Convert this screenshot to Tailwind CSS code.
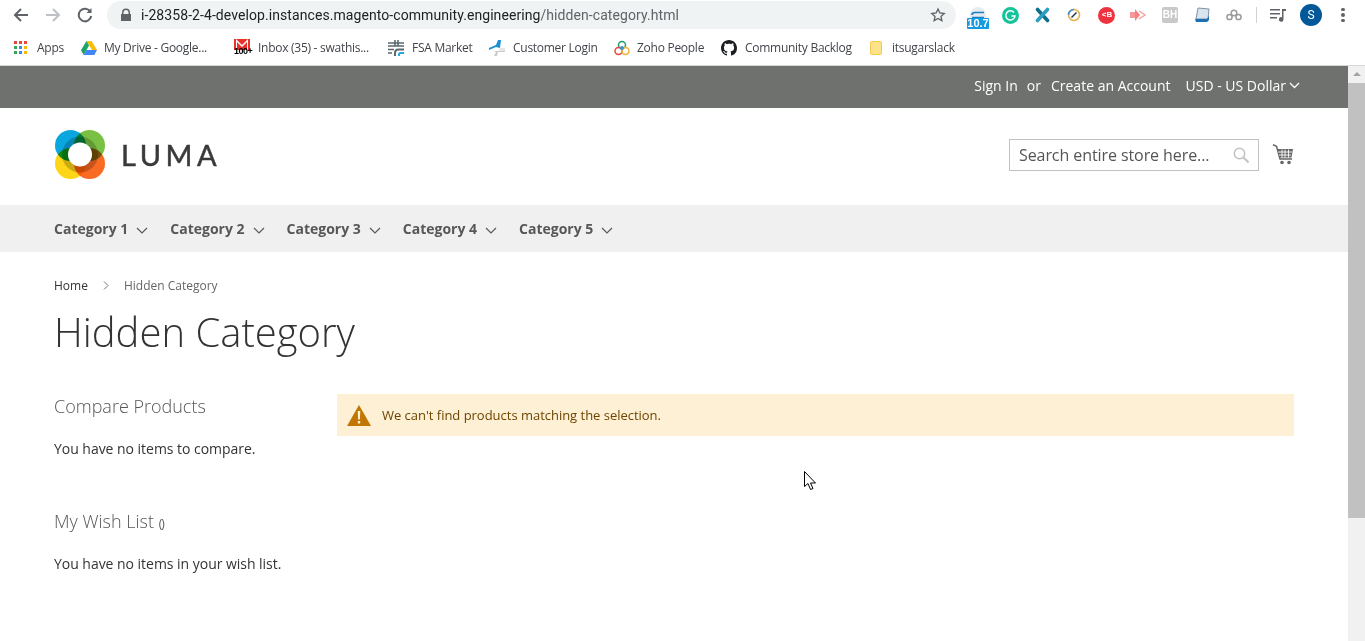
<!DOCTYPE html>
<html lang="en">
<head>
  <meta charset="UTF-8" />
  <title>Hidden Category</title>
  <script src="https://cdn.jsdelivr.net/npm/@tailwindcss/browser@4"></script>
</head>
<body class="relative h-[641px] w-[1365px] overflow-hidden bg-white font-['Open_Sans',sans-serif] text-[#333]">

  <!-- browser toolbar -->
  <div class="flex h-[30px] items-center bg-white">
    <div class="flex w-[107px] items-center gap-[14px] pl-[12px]">
      <svg class="h-[18px] w-[18px]" viewBox="0 0 18 18" fill="none" stroke="#5f6368" stroke-width="2"><path d="M16 9H3M9 3L3 9l6 6"/></svg>
      <svg class="h-[18px] w-[18px]" viewBox="0 0 18 18" fill="none" stroke="#bdc1c6" stroke-width="2"><path d="M2 9h13M9 3l6 6-6 6"/></svg>
      <svg class="h-[18px] w-[18px]" viewBox="0 0 18 18" fill="none" stroke="#5f6368" stroke-width="2"><path d="M14.500 6A6.300 6.300 0 1 0 15.200 10"/><path d="M15.500 2v5h-5" fill="#5f6368" stroke="none"/></svg>
    </div>
    <div class="flex h-[28px] w-[849px] items-center rounded-full bg-[#f0f3f4] pl-[13px] pr-[10px]">
      <svg class="h-[14px] w-[12px]" viewBox="0 0 12 14" fill="#5f6368"><path d="M2 6V4.500a4 4 0 0 1 8 0V6h1v7H1V6zm1.500 0h5V4.500a2.500 2.500 0 0 0-5 0z"/></svg>
      <span class="ml-[9px] font-['Roboto',sans-serif] text-[14px] tracking-[0.075px] text-[#202124]">i-28358-2-4-develop.instances.magento-community.engineering<span class="text-[#5f6368]">/hidden-category.html</span></span>
      <svg class="ml-auto h-[16px] w-[16px]" viewBox="0 0 24 24" fill="none" stroke="#5f6368" stroke-width="2"><path d="M12 3l2.800 6 6.500.7-4.800 4.400 1.300 6.400L12 17.300 6.200 20.500l1.300-6.400L2.700 9.700 9.200 9z"/></svg>
    </div>
    <div class="flex h-[30px] flex-1 items-center pl-[6px]">
      <div class="flex w-[32px] justify-center">
        <div class="relative mt-[6px] h-[22px] w-[22px]">
          <svg class="absolute left-[3px] top-0 h-[11px] w-[16px]" viewBox="0 0 16 11"><path d="M0 11V8a8 8 0 0 1 16 0v3z" fill="#e6ebee"/><path d="M2 8q0-2.500 3-2.500h9M2 10.500h12" fill="none" stroke="#1e7fc0" stroke-width="1.600"/></svg>
          <div class="absolute bottom-0 left-0 h-[11px] w-[22px] rounded-[1px] bg-[#139ae0] text-center font-['Liberation_Sans',sans-serif] text-[11px] font-bold leading-[11px] text-white">10.7</div>
        </div>
      </div>
      <div class="flex w-[32px] justify-center">
        <svg class="h-[17px] w-[17px]" viewBox="0 0 17 17"><circle cx="8.500" cy="8.500" r="8.500" fill="#15c39a"/><path d="M12 5.500A4.600 4.600 0 1 0 13 9H9.500" fill="none" stroke="#fff" stroke-width="1.500"/></svg>
      </div>
      <div class="flex w-[32px] justify-center">
        <svg class="h-[16px] w-[15px]" viewBox="0 0 15 16" fill="none" stroke-width="3.600" stroke-linecap="round"><path d="M2.500 2.500l10 11" stroke="#0d6f8c"/><path d="M12.500 2.500l-10 11" stroke="#2a9fbe"/></svg>
      </div>
      <div class="flex w-[32px] justify-center">
        <svg class="h-[14px] w-[14px]" viewBox="0 0 14 14" fill="none" stroke-width="1.500"><circle cx="7" cy="7" r="5.500" stroke="#e8b04a"/><path d="M1.500 7a5.500 5.500 0 0 1 5.500-5.500" stroke="#3f8fd6"/><path d="M4.500 9.500l5-5" stroke="#234"/></svg>
      </div>
      <div class="flex w-[32px] justify-center">
        <div class="flex h-[17px] w-[17px] items-center justify-center rounded-full bg-[#ee3340] pl-[2px] font-['Liberation_Sans',sans-serif] text-[8px] font-bold text-white">&lt;B</div>
      </div>
      <div class="flex w-[32px] justify-center">
        <svg class="h-[12px] w-[16px]" viewBox="0 0 16 12"><path d="M0 3h5v6H0z" fill="#f9989a"/><path d="M5 0l0 12 5-6z" fill="#f77f82"/><path d="M9 2l6 4-6 4" fill="none" stroke="#f9a0a2" stroke-width="1.500"/></svg>
      </div>
      <div class="flex w-[32px] justify-center">
        <div class="flex h-[16px] w-[16px] items-center justify-center rounded-[2px] bg-[#c9c9c9] font-['Liberation_Sans',sans-serif] text-[10px] font-bold leading-none text-white">BH</div>
      </div>
      <div class="flex w-[32px] justify-center">
        <svg class="h-[16px] w-[15px]" viewBox="0 0 15 16"><path d="M3 1l11 1-1 10H1z" fill="#d9e4ee" stroke="#7f93a8"/><path d="M0 12h12l2-3v4l-2 2H1z" fill="#1b6fb5"/></svg>
      </div>
      <div class="flex w-[32px] justify-center">
        <svg class="h-[12px] w-[16px]" viewBox="0 0 16 12" fill="none" stroke="#9a9a9a" stroke-width="1.500"><circle cx="3.500" cy="8" r="2.600"/><circle cx="12.500" cy="8" r="2.600"/><circle cx="8" cy="4" r="2.800"/></svg>
      </div>
      <div class="flex w-[12px] justify-center"><div class="h-[16px] w-px bg-[#d0d2d4]"></div></div>
      <div class="flex w-[32px] justify-center">
        <svg class="h-[14px] w-[16px]" viewBox="0 0 16 14" fill="#5f6368"><path d="M0 1h10v1.500H0zM0 5h10v1.500H0zM0 9h7v1.500H0zM12 1h4v2h-2.500v8.500a2.300 2.300 0 1 1-1.500-2.200z"/></svg>
      </div>
      <div class="ml-px flex w-[32px] justify-center">
        <div class="flex h-[22px] w-[22px] items-center justify-center rounded-full bg-[#03589a] font-['Roboto',sans-serif] text-[12px] leading-none text-white">S</div>
      </div>
      <div class="flex w-[32px] flex-col items-center gap-[2px]">
        <span class="h-[3.500px] w-[3.500px] rounded-full bg-[#5f6368]"></span>
        <span class="h-[3.500px] w-[3.500px] rounded-full bg-[#5f6368]"></span>
        <span class="h-[3.500px] w-[3.500px] rounded-full bg-[#5f6368]"></span>
      </div>
    </div>
  </div>

  <!-- bookmarks bar -->
  <div class="flex h-[36px] items-center border-b border-[#d5d7d9] bg-white pl-[14px] text-[12px] tracking-[-0.27px] text-[#41454a]">
    <svg class="h-[14px] w-[14px]" viewBox="0 0 14 14">
      <rect x="0" y="0" width="3" height="3" fill="#e8453c"/><rect x="5" y="0" width="3" height="3" fill="#e8453c"/><rect x="10" y="0" width="3" height="3" fill="#e8453c"/>
      <rect x="0" y="5" width="3" height="3" fill="#34a853"/><rect x="5" y="5" width="3" height="3" fill="#4285f4"/><rect x="10" y="5" width="3" height="3" fill="#fbbc05"/>
      <rect x="0" y="10" width="3" height="3" fill="#34a853"/><rect x="5" y="10" width="3" height="3" fill="#4285f4"/><rect x="10" y="10" width="3" height="3" fill="#fbbc05"/>
    </svg>
    <span class="ml-[9px] w-[44px]">Apps</span>
    <svg class="h-[14px] w-[16px]" viewBox="0 0 16 14"><path d="M5.500 0h5l5.500 9h-5z" fill="#fbbc05"/><path d="M5.500 0L8 4.500 2.700 14 0 9.200z" fill="#1fa463"/><path d="M2.700 14l2.700-5H16l-2.700 5z" fill="#4285f4"/></svg>
    <span class="ml-[7px] w-[130px]">My Drive - Google...</span>
    <div class="relative h-[17px] w-[17px]">
      <svg class="absolute left-0 top-0 h-[11px] w-[16px]" viewBox="0 0 16 11"><rect width="16" height="11" fill="#e8312a"/><path d="M2 0l6 6 6-6v11h-1V3L8 8 3 3v8H2z" fill="#fff"/></svg>
      <span class="absolute bottom-0 left-0 font-['Liberation_Sans',sans-serif] text-[9px] font-bold leading-[9px] tracking-[-0.5px] text-black">100+</span>
    </div>
    <span class="ml-[7px] w-[130px]">Inbox (35) - swathis...</span>
    <svg class="h-[16px] w-[16px]" viewBox="0 0 16 16" fill="none" stroke="#5b6770" stroke-width="1.600"><path d="M0 3h16M0 6h16M0 9.500h6M0 13h4M7 0v6M10 0v6"/><path d="M7 16v-3q0-3.500 3.500-3.500H16" stroke-width="2"/><path d="M11 16v-2q0-1 1.500-1H16" stroke="#29a8df" stroke-width="2"/></svg>
    <span class="ml-[8px] w-[77px]">FSA Market</span>
    <svg class="h-[16px] w-[16px]" viewBox="0 0 16 16"><path d="M0 8l7-3 2-5h3l-1 8-4-1-7 3z" fill="#1d8fd6"/><path d="M4 11h12v1H9l-1 4H5l2-4z" fill="#c9ccce"/><path d="M11 8h5v3h-6z" fill="#e3e5e6"/></svg>
    <span class="ml-[8px] w-[101px]">Customer Login</span>
    <svg class="h-[16px] w-[16px]" viewBox="0 0 16 16" fill="none" stroke-width="1.500"><circle cx="8" cy="5" r="3.500" stroke="#1f9d75"/><circle cx="4.500" cy="11" r="3.500" stroke="#e8483c"/><circle cx="11.500" cy="11" r="3.500" stroke="#f2b134"/><circle cx="8" cy="8" r="2" fill="#3f8fd6" stroke="none"/></svg>
    <span class="ml-[7px] w-[84px]">Zoho People</span>
    <svg class="h-[16px] w-[16px]" viewBox="0 0 16 16" fill="#1b1f23"><path d="M8 0C3.580 0 0 3.580 0 8c0 3.540 2.290 6.530 5.470 7.590.4.070.55-.17.55-.38 0-.19-.01-.82-.01-1.490-2.010.37-2.530-.49-2.690-.94-.09-.23-.48-.94-.82-1.130-.28-.15-.68-.52-.01-.53.630-.01 1.080.58 1.230.82.720 1.210 1.870.87 2.330.66.070-.52.280-.87.510-1.070-1.780-.2-3.640-.89-3.640-3.950 0-.87.310-1.590.820-2.150-.08-.2-.36-1.020.08-2.120 0 0 .67-.21 2.200.82.640-.18 1.320-.27 2-.27s1.360.09 2 .27c1.530-1.040 2.200-.82 2.200-.82.440 1.100.16 1.920.08 2.120.51.560.82 1.270.82 2.150 0 3.070-1.870 3.750-3.650 3.950.29.250.54.730.54 1.480 0 1.070-.01 1.930-.01 2.200 0 .21.150.46.550.38A8.010 8.010 0 0 0 16 8c0-4.420-3.580-8-8-8z"/></svg>
    <span class="ml-[8px] w-[125px]">Community Backlog</span>
    <svg class="h-[14px] w-[12px]" viewBox="0 0 12 14"><rect x=".5" y=".5" width="11" height="13" rx="1" fill="#ffe38a" stroke="#f2c94c"/></svg>
    <span class="ml-[10px]">itsugarslack</span>
  </div>

  <!-- page + scrollbar -->
  <div class="flex h-[575px]">
    <div class="w-[1348px]">
      <div class="flex h-[42px] items-center justify-end bg-[#6e716e] pb-[4px] pr-[48px] text-[14px] text-white">
        <span>Sign In</span>
        <span class="ml-[9px]">or</span>
        <span class="ml-[10px]">Create an Account</span>
        <span class="ml-[15px]">USD - US Dollar</span>
        <svg class="ml-[3px] h-[7px] w-[11px]" viewBox="0 0 11 7" fill="none" stroke="#fff" stroke-width="1.300"><path d="M1 1l4.500 4.500L10 1"/></svg>
      </div>

      <header class="flex h-[97px] items-center pb-[4px] pl-[55px] pr-[54px]">
        <svg class="h-[49px] w-[50px]" viewBox="0 0 50 49">
          <circle cx="15.500" cy="15.500" r="15.500" fill="#0aa6df"/>
          <circle cx="34.500" cy="15.500" r="15.500" fill="#7ac143" style="mix-blend-mode:multiply"/>
          <circle cx="15.500" cy="33.500" r="15.500" fill="#ffd518" style="mix-blend-mode:multiply"/>
          <circle cx="34.500" cy="33.500" r="15.500" fill="#f96b22" style="mix-blend-mode:multiply"/>
          <circle cx="25" cy="24.500" r="18" fill="#000" opacity=".2"/>
          <circle cx="25" cy="24.500" r="12" fill="#fff"/>
        </svg>
        <span class="ml-[16px] text-[29px] leading-none tracking-[4.500px] text-[#3a3a3a] [font-family:'Lato',sans-serif] [-webkit-text-stroke:0.5px_#3a3a3a]">LUMA</span>
        <div class="ml-auto flex h-[32px] w-[250px] items-center border border-[#c2c2c2] pl-[9px] pr-[9px] text-[16px] tracking-[-0.08px] text-[#555]">
          <span>Search entire store here...</span>
          <svg class="ml-auto h-[16px] w-[16px]" viewBox="0 0 16 16" fill="none" stroke="#c2c2c2" stroke-width="1.500"><circle cx="6.500" cy="6.500" r="5.200"/><path d="M10.500 10.500L15.500 15.500" stroke-width="2"/></svg>
        </div>
        <svg class="ml-[13px] h-[21px] w-[22px]" viewBox="0 0 22 21">
          <path d="M1 .7l3.500 1.500 3.500 12.800h12" fill="none" stroke="#666" stroke-width="1.500"/>
          <path d="M5 5h16l-1.500 8.500H7.500z" fill="#666"/>
          <path d="M6 8h14M7 11h12M10 5.500v8M13 5.500v8M16.500 5.500v8" stroke="#fff" stroke-width=".9"/>
          <circle cx="10" cy="18.500" r="1.800" fill="#666"/><circle cx="17" cy="18.500" r="1.800" fill="#666"/>
        </svg>
      </header>

      <nav class="flex h-[47px] items-center bg-[#f0f0f0] pl-[54px] text-[14px] font-bold text-[#575757]">
        <span>Category 1</span><svg class="ml-[8px] mr-[22px] mt-[3px] h-[7px] w-[12px]" viewBox="0 0 12 7" fill="none" stroke="#575757" stroke-width="1.200"><path d="M1 1l5 5 5-5"/></svg>
        <span>Category 2</span><svg class="ml-[8px] mr-[22px] mt-[3px] h-[7px] w-[12px]" viewBox="0 0 12 7" fill="none" stroke="#575757" stroke-width="1.200"><path d="M1 1l5 5 5-5"/></svg>
        <span>Category 3</span><svg class="ml-[8px] mr-[22px] mt-[3px] h-[7px] w-[12px]" viewBox="0 0 12 7" fill="none" stroke="#575757" stroke-width="1.200"><path d="M1 1l5 5 5-5"/></svg>
        <span>Category 4</span><svg class="ml-[8px] mr-[22px] mt-[3px] h-[7px] w-[12px]" viewBox="0 0 12 7" fill="none" stroke="#575757" stroke-width="1.200"><path d="M1 1l5 5 5-5"/></svg>
        <span>Category 5</span><svg class="ml-[8px] mt-[3px] h-[7px] w-[12px]" viewBox="0 0 12 7" fill="none" stroke="#575757" stroke-width="1.200"><path d="M1 1l5 5 5-5"/></svg>
      </nav>

      <main class="pl-[54px] pr-[54px]">
        <div class="flex items-center pt-[25px] text-[12px] leading-[17px] text-[#666]">
          <span class="text-[#333]">Home</span>
          <svg class="ml-[15px] mr-[15px] h-[9px] w-[6px]" viewBox="0 0 6 9" fill="none" stroke="#777" stroke-width="1"><path d="M1 .5l4 4-4 4"/></svg>
          <span>Hidden Category</span>
        </div>
        <h1 class="mt-[13px] text-[40px] font-light leading-[50px] text-[#333]">Hidden Category</h1>

        <div class="mt-[37px] flex">
          <aside class="w-[283px] shrink-0">
            <h2 class="text-[18px] font-light leading-[24px] text-[#575757]">Compare Products</h2>
            <p class="mt-[21px] text-[14px] leading-[20px] tracking-[-0.03px] text-[#333]">You have no items to compare.</p>
            <h2 class="mt-[50px] text-[18px] font-light leading-[24px] text-[#575757]">My Wish List <span class="text-[12px] font-normal tracking-[-1px]">()</span></h2>
            <p class="mt-[18px] text-[14px] leading-[20px] tracking-[-0.03px] text-[#333]">You have no items in your wish list.</p>
          </aside>
          <div class="flex-1">
            <div class="flex h-[42px] items-center bg-[#fdf0d5] pl-[10px] text-[13px] tracking-[-0.02px] text-[#6f4400]">
              <svg class="h-[21px] w-[24px]" viewBox="0 0 24 21"><path d="M12 0l12 21H0z" fill="#c07600"/><path d="M10.700 6h2.600l-.4 8.500h-1.800zM10.800 16h2.400v2.400h-2.400z" fill="#fdf0d5"/></svg>
              <span class="ml-[11px] pt-px">We can't find products matching the selection.</span>
            </div>
          </div>
        </div>
      </main>
    </div>

    <!-- scrollbar -->
    <div class="flex w-[17px] flex-col items-center bg-[#f1f1f1]">
      <svg class="mt-[6px] h-[4px] w-[8px]" viewBox="0 0 8 4" fill="#a3a3a3"><path d="M4 0l4 4H0z"/></svg>
      <div class="mt-[7px] h-[435px] w-full bg-[#c1c1c1]"></div>
    </div>
  </div>

  <!-- mouse cursor -->
  <svg class="absolute left-[804px] top-[471px] h-[19px] w-[13px]" viewBox="0 0 13 19" fill="#fff" stroke="#000" stroke-width="1"><path d="M.5.500v15l3.500-3 2.500 6 2.500-1-2.500-5.500h5z"/></svg>
</body>
</html>
